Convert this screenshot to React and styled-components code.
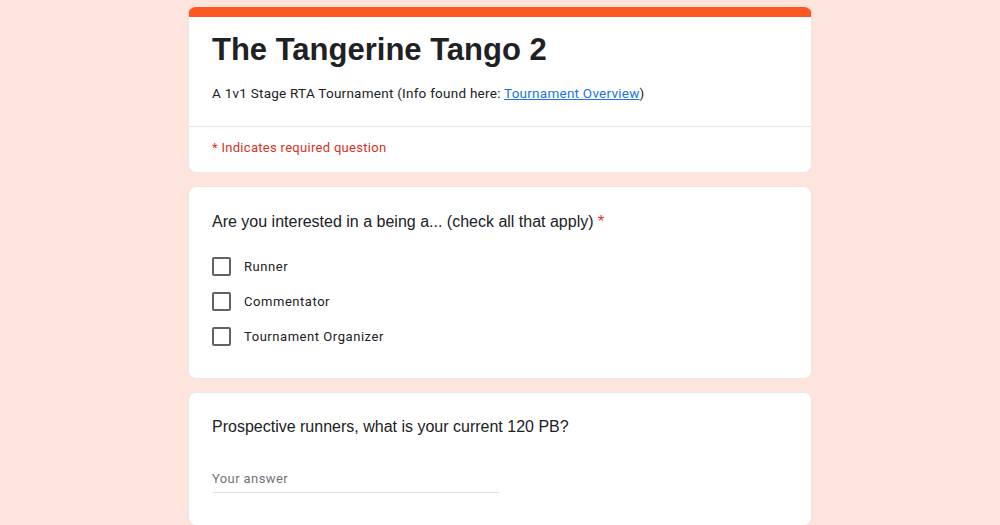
import React from 'react';
import styled, { createGlobalStyle } from 'styled-components';

const GlobalStyle = createGlobalStyle`
  html, body {
    margin: 0;
    padding: 0;
    background: #fde4dc;
  }
  body {
    font-family: Roboto, "Liberation Sans", Arial, sans-serif;
    color: #202124;
  }
`;

const Page = styled.div`
  min-height: 525px;
  padding-top: 7px;
  display: flex;
  flex-direction: column;
  align-items: center;
  gap: 13px;
`;

const Card = styled.div`
  width: 624px;
  box-sizing: border-box;
  background: #fff;
  border: 1px solid #ece7e5;
  border-radius: 8px;
  overflow: hidden;
  ${(p) => p.$accent && `border-top: 10px solid #fd5722;`}
`;

const Header = styled.div`
  padding: 13px 23px 23px;
  border-bottom: 1px solid #e6e6e6;
`;

const Title = styled.h1`
  margin: 0;
  font-family: "Liberation Sans", Arial, sans-serif;
  font-weight: 700;
  font-size: 31px;
  line-height: 40px;
  color: #202124;
`;

const Description = styled.p`
  margin: 13px 0 0;
  font-size: 13.5px;
  line-height: 20px;
  letter-spacing: 0.25px;

  a {
    color: #1a73e8;
    text-decoration: underline;
  }
`;

const Required = styled.div`
  padding: 12px 23px 15px;
  font-size: 13px;
  line-height: 18px;
  letter-spacing: 0.3px;
  color: #d93025;
`;

const Body = styled.div`
  padding: ${(p) => p.$top || 23}px 23px ${(p) => p.$bottom || 24}px;
`;

const Question = styled.div`
  font-family: "Liberation Sans", Arial, sans-serif;
  font-size: 16px;
  line-height: 24px;
  color: #202124;

  span {
    color: #d93025;
  }
`;

const Options = styled.div`
  margin-top: 15px;
  display: flex;
  flex-direction: column;
`;

const Option = styled.label`
  height: 35px;
  display: flex;
  align-items: center;
  gap: 13px;
  font-size: 13px;
  letter-spacing: 0.55px;
  color: #202124;
`;

const Box = styled.span`
  width: 19px;
  height: 19px;
  box-sizing: border-box;
  border: 2px solid #5f6368;
  border-radius: 2px;
`;

const Answer = styled.div`
  margin-top: 26px;
  width: 288px;
  height: 27px;
  display: flex;
  align-items: center;
  border-bottom: 1px solid #e3e3e3;
  font-size: 13px;
  letter-spacing: 0.4px;
  color: #70757a;
`;

const options = ['Runner', 'Commentator', 'Tournament Organizer'];

export default function App() {
  return (
    <>
      <GlobalStyle />
      <Page>
        <Card $accent>
          <Header>
            <Title>The Tangerine Tango 2</Title>
            <Description>
              A 1v1 Stage RTA Tournament (Info found here: <a href="#">Tournament Overview</a>)
            </Description>
          </Header>
          <Required>* Indicates required question</Required>
        </Card>

        <Card>
          <Body>
            <Question>
              Are you interested in a being a... (check all that apply) <span>*</span>
            </Question>
            <Options>
              {options.map((o) => (
                <Option key={o}>
                  <Box />
                  {o}
                </Option>
              ))}
            </Options>
          </Body>
        </Card>

        <Card>
          <Body $top={22} $bottom={32}>
            <Question>Prospective runners, what is your current 120 PB?</Question>
            <Answer>Your answer</Answer>
          </Body>
        </Card>
      </Page>
    </>
  );
}
